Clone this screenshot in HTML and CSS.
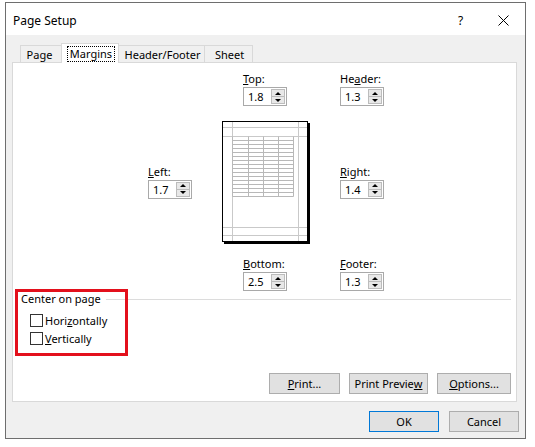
FILE: index.html
```html
<!DOCTYPE html>
<html>
<head>
<meta charset="utf-8">
<link rel="stylesheet" href="styles.css">
</head>
<body>
<div class="window">
  <div class="titlebar">
    <span class="title">Page Setup</span>
    <span class="help">?</span>
    <span class="close">
      <svg width="11" height="11" viewBox="0 0 11 11"><path d="M0.5 0.5 L10.5 10.5 M10.5 0.5 L0.5 10.5" stroke="#000" stroke-width="1" fill="none"/></svg>
    </span>
  </div>
  <div class="body">
    <div class="tabs">
      <div class="tab t-page">Page</div>
      <div class="tab t-margins active"><span class="focus">Margins</span></div>
      <div class="tab t-header">Header/Footer</div>
      <div class="tab t-sheet">Sheet</div>
    </div>
    <div class="panel">
      <div class="margins-grid">
        <div class="field f-top">
          <div class="lbl"><u>T</u>op:</div>
          <div class="spin"><span class="val">1.8</span><span class="arrows"><span class="up"></span><span class="down"></span></span></div>
        </div>
        <div class="field f-header">
          <div class="lbl">He<u>a</u>der:</div>
          <div class="spin"><span class="val">1.3</span><span class="arrows"><span class="up"></span><span class="down"></span></span></div>
        </div>
        <div class="field f-left">
          <div class="lbl"><u>L</u>eft:</div>
          <div class="spin"><span class="val">1.7</span><span class="arrows"><span class="up"></span><span class="down"></span></span></div>
        </div>
        <div class="preview">
          <svg width="89" height="124" viewBox="0 0 89 124">
            <rect x="86" y="2" width="2" height="121" fill="#000"/>
            <rect x="2" y="121" width="86" height="2" fill="#000"/>
            <rect x="0.5" y="0.5" width="85" height="120" fill="#fff" stroke="#000"/>
            <g stroke="#c9c9c9" stroke-width="1">
              <path d="M10.5 1 V120 M76.5 1 V120"/>
              <path d="M1 6.5 H85 M1 15.5 H85 M1 106.5 H85 M1 114.5 H85"/>
            </g>
            <g stroke="#b8b8b8" stroke-width="1">
              <path d="M26.5 15.5 V75.5 M41.5 15.5 V75.5 M56.5 15.5 V75.5 M71.5 15.5 V75.5 M10.5 15.5 V75.5"/>
              <path d="M10.5 19.5 H71.5 M10.5 23.5 H71.5 M10.5 27.5 H71.5 M10.5 31.5 H71.5 M10.5 35.5 H71.5 M10.5 39.5 H71.5 M10.5 43.5 H71.5 M10.5 47.5 H71.5 M10.5 51.5 H71.5 M10.5 55.5 H71.5 M10.5 59.5 H71.5 M10.5 63.5 H71.5 M10.5 67.5 H71.5 M10.5 71.5 H71.5 M10.5 75.5 H71.5"/>
            </g>
          </svg>
        </div>
        <div class="field f-right">
          <div class="lbl"><u>R</u>ight:</div>
          <div class="spin"><span class="val">1.4</span><span class="arrows"><span class="up"></span><span class="down"></span></span></div>
        </div>
        <div class="field f-bottom">
          <div class="lbl"><u>B</u>ottom:</div>
          <div class="spin"><span class="val">2.5</span><span class="arrows"><span class="up"></span><span class="down"></span></span></div>
        </div>
        <div class="field f-footer">
          <div class="lbl"><u>F</u>ooter:</div>
          <div class="spin"><span class="val">1.3</span><span class="arrows"><span class="up"></span><span class="down"></span></span></div>
        </div>
      </div>

      <div class="group">
        <div class="group-head"><span class="group-title">Center on page</span><span class="group-line"></span></div>
        <div class="check-row"><span class="box"></span><span>Hori<u>z</u>ontally</span></div>
        <div class="check-row"><span class="box"></span><span><u>V</u>ertically</span></div>
      </div>

      <div class="buttons">
        <div class="btn b-print"><u>P</u>rint...</div>
        <div class="btn b-preview">Print Previe<u>w</u></div>
        <div class="btn b-options"><u>O</u>ptions...</div>
      </div>

      <div class="highlight"></div>
    </div>
    <div class="footer-buttons">
      <div class="btn b-ok default">OK</div>
      <div class="btn b-cancel">Cancel</div>
    </div>
  </div>
</div>
</body>
</html>
```

FILE: styles.css
```css
* { box-sizing: border-box; }
html, body { margin: 0; padding: 0; background: #fff; }
body {
  font-family: "Segoe UI", "Noto Sans", sans-serif;
  font-size: 11px;
  color: #000;
}
u { text-decoration: underline; text-underline-offset: 1px; }

.window {
  margin: 2px 0 0 5px;
  width: 521px;
  height: 437px;
  border: 1px solid #6e6e6e;
  background: #f0f0f0;
  display: flex;
  flex-direction: column;
}

.titlebar {
  height: 33px;
  background: #fff;
  display: flex;
  align-items: center;
  padding: 3px 0 0 7px;
  font-size: 12px;
}
.title { flex: 1; }
.help { width: 12px; margin-right: 28px; font-size: 12px; }
.close { width: 11px; height: 11px; margin-right: 16px; display: flex; }

.body {
  padding: 0 6px 6px 6px;
  display: flex;
  flex-direction: column;
}

.tabs {
  display: flex;
  align-items: flex-end;
  margin: 8px 0 0 8px;
  height: 19px;
  position: relative;
  z-index: 1;
}
.tab {
  height: 17px;
  border: 1px solid #d9d9d9;
  border-bottom: none;
  background: #f0f0f0;
  display: flex;
  align-items: center;
  justify-content: center;
  margin-left: -1px;
  padding-top: 1px;
}
.tab.active {
  height: 20px;
  background: #fff;
  margin-bottom: -1px;
  padding-top: 0;
}
.t-page { width: 42px; margin-left: 0; padding-right: 3px; }
.t-margins { width: 58px; padding-left: 2px; }
.t-header { width: 87px; padding-left: 2px; }
.t-sheet { width: 49px; padding-left: 2px; }
.focus {
  border: 1px dotted #000;
  padding: 0 2px;
  line-height: 14px;
}

.panel {
  position: relative;
  width: 505px;
  background: #fff;
  border: 1px solid #d9d9d9;
  padding: 9px 5px 7px 0;
}

.margins-grid {
  display: grid;
  grid-template-columns: 74px 88px auto;
  grid-template-rows: auto auto auto;
  row-gap: 15px;
  margin-left: 135px;
}
.field { display: flex; flex-direction: column; }
.lbl { height: 15px; line-height: 14px; }
.f-top { grid-column: 2; grid-row: 1; margin-left: 21px; }
.f-header { grid-column: 3; grid-row: 1; margin-left: 30px; }
.f-left { grid-column: 1; grid-row: 2; align-self: center; }
.preview { grid-column: 2; grid-row: 2; height: 121px; }
.preview svg { display: block; }
.f-right { grid-column: 3; grid-row: 2; align-self: center; margin-left: 30px; }
.f-bottom { grid-column: 2; grid-row: 3; margin-left: 21px; }
.f-footer { grid-column: 3; grid-row: 3; margin-left: 30px; }

.spin {
  width: 44px;
  height: 19px;
  border: 1px solid #a9a9a9;
  background: #fff;
  display: flex;
  align-items: stretch;
}
.val { flex: 1; padding-left: 4px; line-height: 17px; }
.arrows {
  width: 14px;
  margin: 1px;
  display: flex;
  flex-direction: column;
  border: 1px solid #bcbcbc;
  background: #e8e8e8;
}
.up, .down {
  flex: 1;
  display: flex;
  align-items: center;
  justify-content: center;
}
.up { border-bottom: 1px solid #bcbcbc; }
.up::before {
  content: "";
  border-left: 3px solid transparent;
  border-right: 3px solid transparent;
  border-bottom: 3px solid #000;
}
.down::before {
  content: "";
  border-left: 3px solid transparent;
  border-right: 3px solid transparent;
  border-top: 3px solid #000;
}

.group { margin: 1px 0 0 8px; }
.group-head { display: flex; align-items: center; height: 14px; line-height: 14px; }
.group-line { flex: 1; border-top: 1px solid #dcdcdc; margin: 1px 0 0 5px; }
.check-row {
  height: 18px;
  display: flex;
  align-items: center;
  padding-left: 9px;
  gap: 2px;
}
.group-head + .check-row { margin-top: 5px; }
.box {
  width: 13px;
  height: 13px;
  border: 1px solid #333;
  background: #fff;
}

.buttons {
  display: flex;
  justify-content: flex-end;
  gap: 9px;
  margin-top: 26px;
}
.btn {
  height: 21px;
  background: #e1e1e1;
  border: 1px solid #adadad;
  display: flex;
  align-items: center;
  justify-content: center;
}
.b-print { width: 71px; }
.b-preview { width: 79px; }
.b-options { width: 74px; }

.highlight {
  position: absolute;
  left: 2px;
  top: 226px;
  width: 113px;
  height: 67px;
  border: 3px solid #e3101c;
}

.footer-buttons {
  display: flex;
  justify-content: flex-end;
  gap: 10px;
  margin-top: 9px;
}
.b-ok { width: 70px; }
.b-cancel { width: 70px; }
.default { border-color: #0078d7; }
```
